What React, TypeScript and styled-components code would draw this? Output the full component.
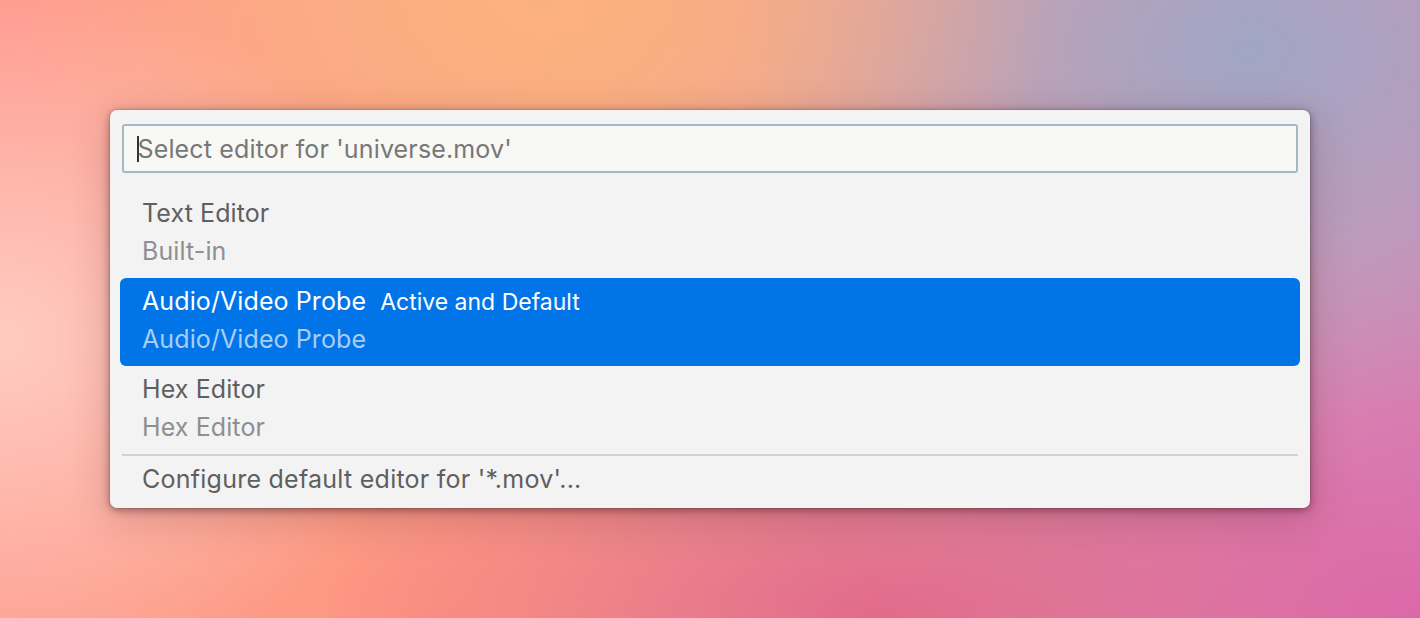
import React from "react";
import styled, { createGlobalStyle } from "styled-components";

const GlobalStyle = createGlobalStyle`
  html, body {
    margin: 0;
    padding: 0;
  }
  body {
    font-family: Inter, "Noto Sans", "Liberation Sans", sans-serif;
    -webkit-font-smoothing: antialiased;
  }
  * { box-sizing: border-box; }
`;

const Desktop = styled.div`
  width: 1420px;
  height: 618px;
  overflow: hidden;
  padding: 110px 110px 0 110px;
  background:
    radial-gradient(ellipse 420px 360px at 0% 55%, rgba(255, 206, 196, 0.95), rgba(255, 206, 196, 0) 100%),
    radial-gradient(ellipse 520px 300px at 38% 0%, rgba(252, 178, 124, 0.95), rgba(252, 178, 124, 0) 100%),
    radial-gradient(ellipse 520px 380px at 88% 8%, rgba(160, 166, 196, 1), rgba(160, 166, 196, 0) 100%),
    radial-gradient(ellipse 560px 300px at 62% 100%, rgba(226, 100, 136, 0.9), rgba(226, 100, 136, 0) 100%),
    radial-gradient(ellipse 500px 380px at 100% 100%, rgba(220, 104, 170, 1), rgba(220, 104, 170, 0) 100%),
    radial-gradient(ellipse 460px 320px at 30% 100%, rgba(255, 146, 126, 0.85), rgba(255, 146, 126, 0) 100%),
    linear-gradient(100deg, #ff9a8f 0%, #f7a98c 40%, #d99aae 75%, #d48cb8 100%);
`;

const Picker = styled.div`
  width: 1200px;
  background: #f3f3f3;
  border-radius: 7px;
  box-shadow: 0 0 0 1px rgba(0, 0, 0, 0.07), 0 2px 8px rgba(60, 20, 30, 0.5),
    0 10px 40px rgba(80, 30, 40, 0.22);
  padding: 14px 10px 6px 10px;
  display: flex;
  flex-direction: column;
`;

const InputBox = styled.div`
  margin: 0 2px;
  height: 49px;
  background: #f8f8f5;
  border: 2px solid #a3bac6;
  border-radius: 3px;
  display: flex;
  align-items: center;
  padding-left: 13px;
`;

const Caret = styled.span`
  width: 1.5px;
  height: 26px;
  background: #333;
  margin-right: -1px;
`;

const Placeholder = styled.span`
  font-size: 25px;
  color: #777777;
  letter-spacing: 0.15px;
`;

const List = styled.div`
  margin-top: 17px;
  display: flex;
  flex-direction: column;
`;

const Row = styled.div<{ $selected?: boolean }>`
  height: 88px;
  border-radius: 6px;
  padding: 4px 22px 0 22px;
  background: ${(p) => (p.$selected ? "#0175e7" : "transparent")};
  display: flex;
  flex-direction: column;
`;

const LabelLine = styled.div`
  display: flex;
  align-items: baseline;
  gap: 14px;
  height: 38px;
  line-height: 38px;
`;

const Label = styled.span<{ $selected?: boolean }>`
  font-size: 25px;
  letter-spacing: 0.1px;
  color: ${(p) => (p.$selected ? "#ffffff" : "#5f5f5f")};
`;

const Badge = styled.span`
  font-size: 23px;
  color: #ffffff;
`;

const Description = styled.div<{ $selected?: boolean }>`
  font-size: 25px;
  letter-spacing: 0.1px;
  line-height: 38px;
  height: 38px;
  color: ${(p) => (p.$selected ? "#a9cdf6" : "#8f8f8f")};
`;

const Separator = styled.div`
  margin: 0 2px;
  height: 2px;
  background: #d0d1dc;
`;

const ActionRow = styled.div`
  height: 46px;
  padding: 4px 22px 0 22px;
  font-size: 25px;
  letter-spacing: 0.25px;
  line-height: 38px;
  color: #5f5f5f;
`;

type Item = { label: string; description: string; badge?: string; selected?: boolean };

const items: Item[] = [
  { label: "Text Editor", description: "Built-in" },
  {
    label: "Audio/Video Probe",
    description: "Audio/Video Probe",
    badge: "Active and Default",
    selected: true,
  },
  { label: "Hex Editor", description: "Hex Editor" },
];

export default function App() {
  return (
    <>
      <GlobalStyle />
      <Desktop>
        <Picker>
          <InputBox>
            <Caret />
            <Placeholder>Select editor for 'universe.mov'</Placeholder>
          </InputBox>
          <List>
            {items.map((it) => (
              <Row key={it.label} $selected={it.selected}>
                <LabelLine>
                  <Label $selected={it.selected}>{it.label}</Label>
                  {it.badge && <Badge>{it.badge}</Badge>}
                </LabelLine>
                <Description $selected={it.selected}>{it.description}</Description>
              </Row>
            ))}
          </List>
          <Separator />
          <ActionRow>Configure default editor for '*.mov'...</ActionRow>
        </Picker>
      </Desktop>
    </>
  );
}
